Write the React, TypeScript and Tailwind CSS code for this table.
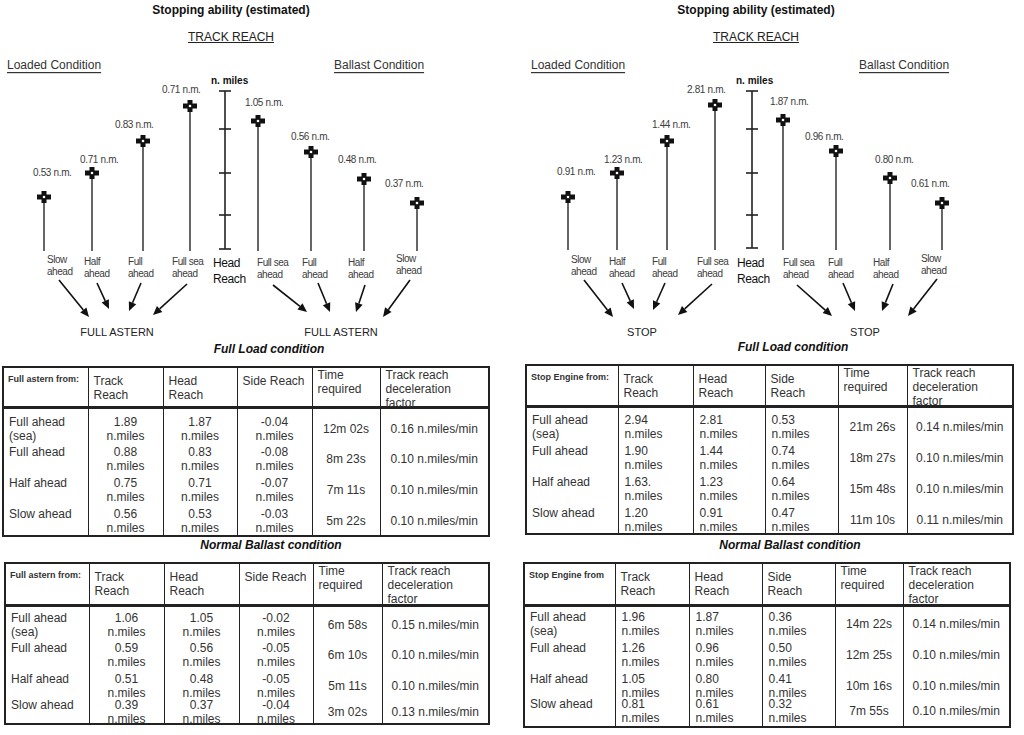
import React from "react";

type Bar = [number, number, string, number, number];
type Lbl = [string, string, number, number];
type Arr = [number, number, number, number];

interface DiagramCfg {
  ox: number;
  w: number;
  bars: Bar[];
  barBottom: number;
  scaleX: number;
  scaleTop: number;
  ticks: number[];
  scaleBottom: number;
  labels: Lbl[];
  head: [number, number];
  arrows: Arr[];
  targets: [string, number, number][];
  loaded: [number, number];
  ballast: [number, number];
  miles: [number, number];
}

const leftDiagram: DiagramCfg = {
  ox: 0,
  w: 500,
  bars: [
    [44, 197, "0.53 n.m.", 33, 172],
    [92, 173, "0.71 n.m.", 80, 159],
    [143, 141, "0.83 n.m.", 115, 124],
    [190, 106, "0.71 n.m.", 162, 89],
    [258, 121, "1.05 n.m.", 245, 102],
    [311, 152, "0.56 n.m.", 291, 136],
    [364, 179, "0.48 n.m.", 338, 159],
    [417, 203, "0.37 n.m.", 385, 183],
  ],
  barBottom: 251,
  scaleX: 225,
  scaleTop: 91,
  ticks: [129, 173, 215],
  scaleBottom: 249,
  labels: [
    ["Slow", "ahead", 47, 259],
    ["Half", "ahead", 84, 261],
    ["Full", "ahead", 128, 261],
    ["Full sea", "ahead", 172, 261],
    ["Full sea", "ahead", 257, 262],
    ["Full", "ahead", 302, 262],
    ["Half", "ahead", 348, 262],
    ["Slow", "ahead", 396, 258],
  ],
  head: [213, 263],
  arrows: [
    [59, 280, 89, 317],
    [97, 283, 109, 309],
    [141, 283, 129, 311],
    [187, 284, 153, 315],
    [273, 285, 307, 312],
    [318, 283, 330, 312],
    [365, 285, 356, 312],
    [410, 280, 383, 317],
  ],
  targets: [
    ["FULL ASTERN", 117, 332],
    ["FULL ASTERN", 341, 332],
  ],
  loaded: [7, 65],
  ballast: [334, 65],
  miles: [211, 80],
};

const rightDiagram: DiagramCfg = {
  ox: 510,
  w: 514,
  bars: [
    [568, 197, "0.91 n.m.", 557, 171],
    [617, 173, "1.23 n.m.", 604, 159],
    [667, 141, "1.44 n.m.", 652, 124],
    [715, 105, "2.81 n.m.", 687, 89],
    [783, 120, "1.87 n.m.", 770, 101],
    [836, 151, "0.96 n.m.", 805, 136],
    [890, 178, "0.80 n.m.", 875, 159],
    [942, 203, "0.61 n.m.", 911, 183],
  ],
  barBottom: 250,
  scaleX: 752,
  scaleTop: 91,
  ticks: [129, 173, 215],
  scaleBottom: 248,
  labels: [
    ["Slow", "ahead", 571, 259],
    ["Half", "ahead", 609, 261],
    ["Full", "ahead", 652, 261],
    ["Full sea", "ahead", 697, 261],
    ["Full sea", "ahead", 783, 262],
    ["Full", "ahead", 828, 262],
    ["Half", "ahead", 873, 262],
    ["Slow", "ahead", 921, 258],
  ],
  head: [737, 263],
  arrows: [
    [584, 280, 613, 317],
    [622, 283, 634, 309],
    [665, 283, 653, 310],
    [712, 284, 678, 315],
    [797, 285, 832, 316],
    [843, 283, 855, 311],
    [893, 284, 882, 311],
    [937, 279, 908, 316],
  ],
  targets: [
    ["STOP", 642, 332],
    ["STOP", 865, 332],
  ],
  loaded: [531, 65],
  ballast: [859, 65],
  miles: [736, 80],
};

function Marker({ x, y }: { x: number; y: number }) {
  return (
    <g>
      <rect x={x - 7} y={y - 2.5} width={14} height={5} fill="#111" />
      <rect x={x - 2.5} y={y - 6} width={5} height={12} fill="#111" />
      <circle cx={x} cy={y} r={1.3} fill="#fff" />
    </g>
  );
}

function Arrow({ a }: { a: Arr }) {
  const [x1, y1, x2, y2] = a;
  const dx = x2 - x1;
  const dy = y2 - y1;
  const L = Math.hypot(dx, dy);
  const ux = dx / L;
  const uy = dy / L;
  const hl = 9;
  const hw = 4;
  const bx = x2 - ux * hl;
  const by = y2 - uy * hl;
  const px = -uy * hw;
  const py = ux * hw;
  return (
    <g>
      <line x1={x1} y1={y1} x2={bx} y2={by} stroke="#111" strokeWidth={1.6} />
      <polygon points={`${x2},${y2} ${bx + px},${by + py} ${bx - px},${by - py}`} fill="#111" />
    </g>
  );
}

const LBL = "#3c3c3c";

function Diagram({ d }: { d: DiagramCfg }) {
  return (
    <svg
      width={d.w}
      height={292}
      viewBox={`${d.ox} 48 ${d.w} 292`}
      className="block mt-[4px]"
      fontFamily="'Liberation Sans', Arial, sans-serif"
    >
      <text x={d.loaded[0]} y={d.loaded[1]} fontSize={12} fill="#333" dominantBaseline="central" textDecoration="underline">
        Loaded Condition
      </text>
      <text x={d.ballast[0]} y={d.ballast[1]} fontSize={12} fill="#333" dominantBaseline="central" textDecoration="underline">
        Ballast Condition
      </text>
      <text x={d.miles[0]} y={d.miles[1]} fontSize={10} fontWeight="bold" fill="#111" dominantBaseline="central">
        n. miles
      </text>
      <line x1={d.scaleX} y1={d.scaleTop} x2={d.scaleX} y2={d.scaleBottom} stroke="#222" strokeWidth={1.6} />
      {[d.scaleTop, ...d.ticks, d.scaleBottom].map((t, i) => (
        <line key={i} x1={d.scaleX - 6} y1={t} x2={d.scaleX + 6} y2={t} stroke="#222" strokeWidth={1.6} />
      ))}
      <text x={d.head[0]} y={d.head[1]} fontSize={12} fill="#111" dominantBaseline="central" letterSpacing={-0.4}>
        Head
      </text>
      <text x={d.head[0]} y={d.head[1] + 16} fontSize={12} fill="#111" dominantBaseline="central" letterSpacing={-0.4}>
        Reach
      </text>
      {d.bars.map(([x, y, label, lx, ly], i) => (
        <g key={i}>
          <line x1={x} y1={y + 5} x2={x} y2={d.barBottom} stroke="#333" strokeWidth={1.5} />
          <Marker x={x} y={y} />
          <text x={lx} y={ly} fontSize={10} fill={LBL} dominantBaseline="central" letterSpacing={-0.35}>
            {label}
          </text>
        </g>
      ))}
      {d.labels.map(([a, b, x, y], i) => (
        <g key={i}>
          <text x={x} y={y} fontSize={10} fill={LBL} dominantBaseline="central" letterSpacing={-0.45}>
            {a}
          </text>
          <text x={x} y={y + 12.5} fontSize={10} fill={LBL} dominantBaseline="central" letterSpacing={-0.45}>
            {b}
          </text>
        </g>
      ))}
      {d.arrows.map((a, i) => (
        <Arrow key={i} a={a} />
      ))}
      {d.targets.map(([t, x, y], i) => (
        <text key={i} x={x} y={y} fontSize={11} fill="#222" textAnchor="middle" dominantBaseline="central">
          {t}
        </text>
      ))}
    </svg>
  );
}

interface Row {
  name: string[];
  tr: string;
  hr: string;
  sr: string;
  time: string;
  dec: string;
}

interface TableCfg {
  head: string;
  sideTwoLines: boolean;
  center: boolean;
  tableCls: string;
  cols: string[];
  headH: string;
  hs: string[];
  pts: string[];
  clips: string[];
  rows: Row[];
}

const names = [["Full ahead", "(sea)"], ["Full ahead"], ["Half ahead"], ["Slow ahead"]];

function mkRows(data: string[][]): Row[] {
  return data.map((r, i) => ({
    name: names[i],
    tr: r[0],
    hr: r[1],
    sr: r[2],
    time: r[3],
    dec: r[4] + " n.miles/min",
  }));
}

const tLeft1: TableCfg = {
  head: "Full astern from:",
  sideTwoLines: false,
  center: true,
  tableCls: "w-[486px] ml-[2px] mt-[10px]",
  cols: ["w-[85px]", "w-[75px]", "w-[74px]", "w-[75px]", "w-[68px]", "w-[109px]"],
  headH: "h-[38px]",
  hs: ["h-[31px]", "h-[31px]", "h-[31px]", "h-[33px]"],
  pts: ["pt-[6px]", "pt-[5px]", "pt-[5px]", "pt-[5px]"],
  clips: ["overflow-visible", "overflow-visible", "overflow-visible", "overflow-visible"],
  rows: mkRows([
    ["1.89", "1.87", "-0.04", "12m 02s", "0.16"],
    ["0.88", "0.83", "-0.08", "8m 23s", "0.10"],
    ["0.75", "0.71", "-0.07", "7m 11s", "0.10"],
    ["0.56", "0.53", "-0.03", "5m 22s", "0.10"],
  ]),
};

const tLeft2: TableCfg = {
  head: "Full astern from:",
  sideTwoLines: false,
  center: true,
  tableCls: "w-[484px] ml-[4px] mt-[10px]",
  cols: ["w-[84px]", "w-[75px]", "w-[75px]", "w-[74px]", "w-[69px]", "w-[107px]"],
  headH: "h-[40px]",
  hs: ["h-[31px]", "h-[30px]", "h-[30px]", "h-[25px]"],
  pts: ["pt-[4px]", "pt-[3px]", "pt-[4px]", "pt-[0px]"],
  clips: ["overflow-visible", "overflow-visible", "overflow-hidden", "overflow-visible"],
  rows: mkRows([
    ["1.06", "1.05", "-0.02", "6m 58s", "0.15"],
    ["0.59", "0.56", "-0.05", "6m 10s", "0.10"],
    ["0.51", "0.48", "-0.05", "5m 11s", "0.10"],
    ["0.39", "0.37", "-0.04", "3m 02s", "0.13"],
  ]),
};

const tRight1: TableCfg = {
  head: "Stop Engine from:",
  sideTwoLines: true,
  center: false,
  tableCls: "w-[487px] ml-[15px] mt-[10px]",
  cols: ["w-[92px]", "w-[75px]", "w-[72px]", "w-[73px]", "w-[69px]", "w-[106px]"],
  headH: "h-[39px]",
  hs: ["h-[31px]", "h-[31px]", "h-[31px]", "h-[32px]"],
  pts: ["pt-[5px]", "pt-[5px]", "pt-[5px]", "pt-[5px]"],
  clips: ["overflow-visible", "overflow-visible", "overflow-visible", "overflow-visible"],
  rows: mkRows([
    ["2.94", "2.81", "0.53", "21m 26s", "0.14"],
    ["1.90", "1.44", "0.74", "18m 27s", "0.10"],
    ["1.63.", "1.23", "0.64", "15m 48s", "0.10"],
    ["1.20", "0.91", "0.47", "11m 10s", "0.11"],
  ]),
};

const tRight2: TableCfg = {
  head: "Stop Engine from",
  sideTwoLines: true,
  center: false,
  tableCls: "w-[486px] ml-[13px] mt-[10px]",
  cols: ["w-[91px]", "w-[74px]", "w-[73px]", "w-[73px]", "w-[68px]", "w-[107px]"],
  headH: "h-[40px]",
  hs: ["h-[31px]", "h-[30px]", "h-[29px]", "h-[29px]"],
  pts: ["pt-[3px]", "pt-[3px]", "pt-[4px]", "pt-[0px]"],
  clips: ["overflow-visible", "overflow-visible", "overflow-hidden", "overflow-visible"],
  rows: mkRows([
    ["1.96", "1.87", "0.36", "14m 22s", "0.14"],
    ["1.26", "0.96", "0.50", "12m 25s", "0.10"],
    ["1.05", "0.80", "0.41", "10m 16s", "0.10"],
    ["0.81", "0.61", "0.32", "7m 55s", "0.10"],
  ]),
};

function DataTable({ t }: { t: TableCfg }) {
  const th = "p-0 align-top text-left font-normal border border-[#222] border-b-[3px] border-b-double";
  const td = "p-0 align-top border-x border-[#222]";
  const val = t.center ? "text-center" : "pl-[6px]";
  return (
    <table className={`border-collapse table-fixed border-2 border-[#222] text-[12px] leading-[14px] text-[#333] ${t.tableCls}`}>
      <colgroup>
        {t.cols.map((c, i) => (
          <col key={i} className={c} />
        ))}
      </colgroup>
      <thead>
        <tr>
          <th className={th}>
            <div className={`${t.headH} pt-[6px] pl-[4px] text-[9px] leading-[11px] font-bold whitespace-nowrap`}>{t.head}</div>
          </th>
          <th className={th}>
            <div className={`${t.headH} pt-[6px] pl-[5px]`}>
              Track
              <br />
              Reach
            </div>
          </th>
          <th className={th}>
            <div className={`${t.headH} pt-[6px] pl-[5px]`}>
              Head
              <br />
              Reach
            </div>
          </th>
          <th className={th}>
            <div className={`${t.headH} pt-[6px] pl-[5px] whitespace-nowrap`}>
              {t.sideTwoLines ? (
                <>
                  Side
                  <br />
                  Reach
                </>
              ) : (
                "Side Reach"
              )}
            </div>
          </th>
          <th className={th}>
            <div className={`${t.headH} pt-[0px] pl-[5px]`}>
              Time
              <br />
              required
            </div>
          </th>
          <th className={th}>
            <div className={`${t.headH} pt-[0px] pl-[5px]`}>
              Track reach
              <br />
              deceleration
              <br />
              factor
            </div>
          </th>
        </tr>
      </thead>
      <tbody>
        {t.rows.map((r, i) => (
          <tr key={i}>
            <td className={td}>
              <div className={`${t.hs[i]} ${t.pts[i]} ${t.clips[i]} pl-[5px]`}>
                {r.name.map((n, k) => (
                  <div key={k}>{n}</div>
                ))}
              </div>
            </td>
            {[r.tr, r.hr, r.sr].map((v, k) => (
              <td key={k} className={td}>
                <div className={`${t.hs[i]} ${t.pts[i]} ${t.clips[i]} ${val}`}>
                  <div>{v}</div>
                  <div>n.miles</div>
                </div>
              </td>
            ))}
            <td className={td}>
              <div className={`${t.hs[i]} ${t.pts[i]}`}>
                <div className="h-[28px] flex items-center justify-center whitespace-nowrap">{r.time}</div>
              </div>
            </td>
            <td className={td}>
              <div className={`${t.hs[i]} ${t.pts[i]}`}>
                <div className="h-[28px] flex items-center justify-center whitespace-nowrap">{r.dec}</div>
              </div>
            </td>
          </tr>
        ))}
      </tbody>
    </table>
  );
}

export default function App() {
  return (
    <div className="w-[1024px] h-[735px] bg-white overflow-hidden flex font-['Liberation_Sans',Arial,sans-serif] text-[#333]">
      <div className="w-[500px] flex flex-col">
        <div className="w-[462px] mt-[3px] text-center text-[12px] leading-[14px] font-bold text-[#111]">
          Stopping ability (estimated)
        </div>
        <div className="w-[462px] mt-[13px] text-center text-[12px] leading-[14px] text-[#222]">
          <span className="underline">TRACK REACH</span>
        </div>
        <Diagram d={leftDiagram} />
        <div className="mt-[2px] pl-[38px] text-center text-[12px] leading-[14px] font-bold italic text-[#111]">
          Full Load condition
        </div>
        <DataTable t={tLeft1} />
        <div className="mt-[1px] pl-[42px] text-center text-[12px] leading-[14px] font-bold italic text-[#111]">
          Normal Ballast condition
        </div>
        <DataTable t={tLeft2} />
      </div>
      <div className="w-[514px] ml-[10px] flex flex-col">
        <div className="w-[492px] mt-[3px] text-center text-[12px] leading-[14px] font-bold text-[#111]">
          Stopping ability (estimated)
        </div>
        <div className="w-[492px] mt-[13px] text-center text-[12px] leading-[14px] text-[#222]">
          <span className="underline">TRACK REACH</span>
        </div>
        <Diagram d={rightDiagram} />
        <div className="mt-[0px] pl-[52px] text-center text-[12px] leading-[14px] font-bold italic text-[#111]">
          Full Load condition
        </div>
        <DataTable t={tRight1} />
        <div className="mt-[3px] pl-[46px] text-center text-[12px] leading-[14px] font-bold italic text-[#111]">
          Normal Ballast condition
        </div>
        <DataTable t={tRight2} />
      </div>
    </div>
  );
}
